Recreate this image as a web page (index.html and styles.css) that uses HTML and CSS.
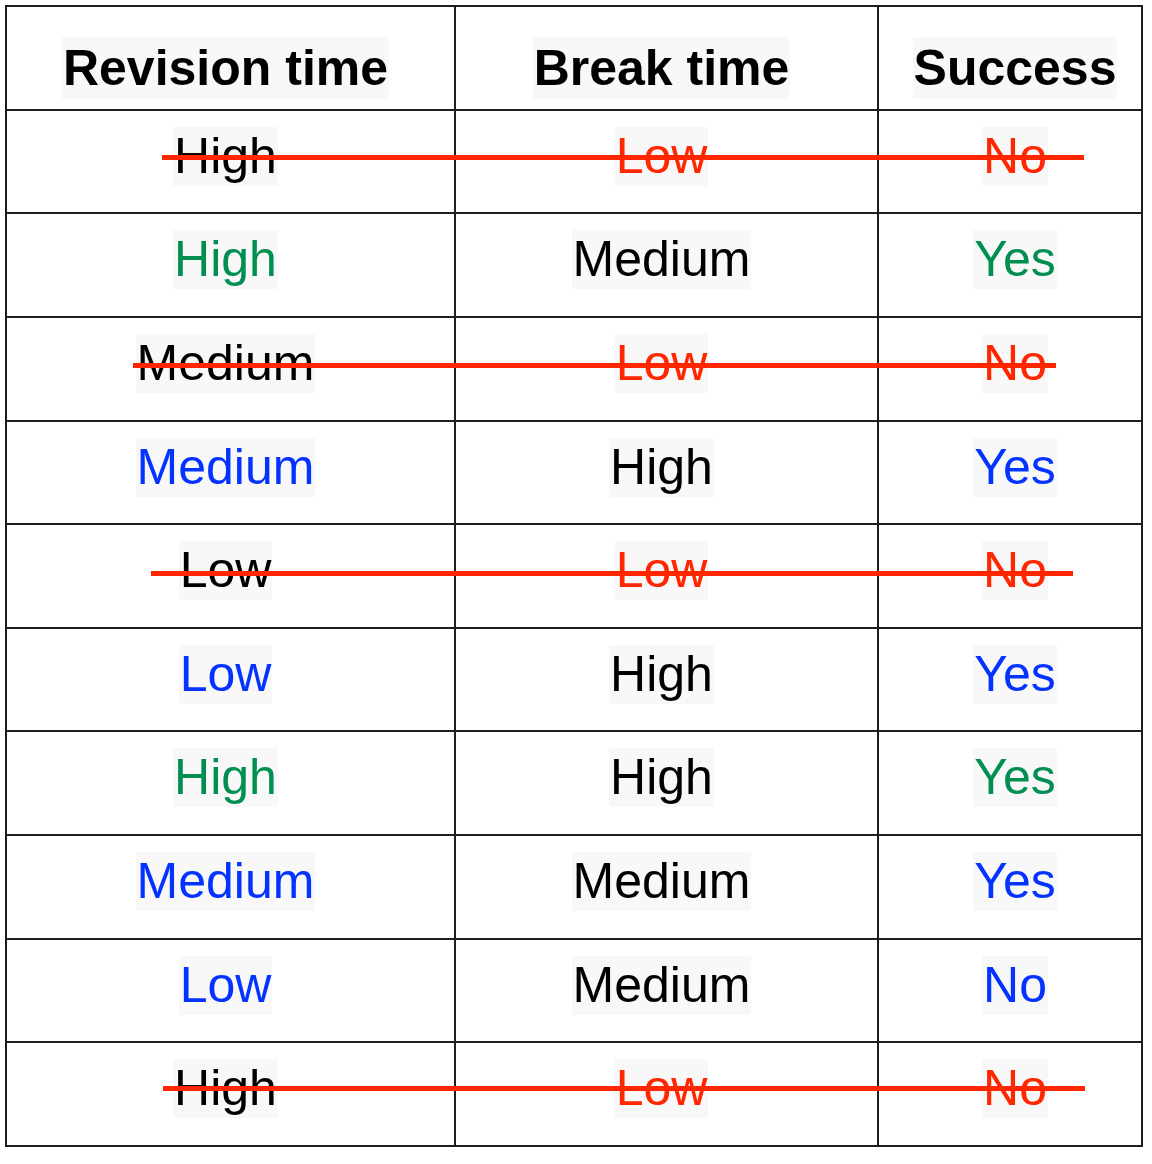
FILE: index.html
```html
<!DOCTYPE html>
<html lang="en">
<head>
<meta charset="utf-8">
<title>Revision and break time</title>
<link rel="stylesheet" href="styles.css">
</head>
<body>
<div class="wrap">
  <table class="grid">
    <colgroup>
      <col class="c1"><col class="c2"><col class="c3">
    </colgroup>
    <thead>
      <tr>
        <th class="k1"><span class="hl">Revision time</span></th>
        <th class="k2"><span class="hl">Break time</span></th>
        <th class="k3"><span class="hl">Success</span></th>
      </tr>
    </thead>
    <tbody>
      <tr>
        <td class="k1"><span class="hl">High</span></td>
        <td class="k2"><span class="hl red">Low</span></td>
        <td class="k3"><span class="hl red">No</span></td>
      </tr>
      <tr>
        <td class="k1"><span class="hl green">High</span></td>
        <td class="k2"><span class="hl">Medium</span></td>
        <td class="k3"><span class="hl green">Yes</span></td>
      </tr>
      <tr>
        <td class="k1"><span class="hl">Medium</span></td>
        <td class="k2"><span class="hl red">Low</span></td>
        <td class="k3"><span class="hl red">No</span></td>
      </tr>
      <tr>
        <td class="k1"><span class="hl blue">Medium</span></td>
        <td class="k2"><span class="hl">High</span></td>
        <td class="k3"><span class="hl blue">Yes</span></td>
      </tr>
      <tr>
        <td class="k1"><span class="hl">Low</span></td>
        <td class="k2"><span class="hl red">Low</span></td>
        <td class="k3"><span class="hl red">No</span></td>
      </tr>
      <tr>
        <td class="k1"><span class="hl blue">Low</span></td>
        <td class="k2"><span class="hl">High</span></td>
        <td class="k3"><span class="hl blue">Yes</span></td>
      </tr>
      <tr>
        <td class="k1"><span class="hl green">High</span></td>
        <td class="k2"><span class="hl">High</span></td>
        <td class="k3"><span class="hl green">Yes</span></td>
      </tr>
      <tr>
        <td class="k1"><span class="hl blue">Medium</span></td>
        <td class="k2"><span class="hl">Medium</span></td>
        <td class="k3"><span class="hl blue">Yes</span></td>
      </tr>
      <tr>
        <td class="k1"><span class="hl blue">Low</span></td>
        <td class="k2"><span class="hl">Medium</span></td>
        <td class="k3"><span class="hl blue">No</span></td>
      </tr>
      <tr>
        <td class="k1"><span class="hl">High</span></td>
        <td class="k2"><span class="hl red">Low</span></td>
        <td class="k3"><span class="hl red">No</span></td>
      </tr>
    </tbody>
  </table>
  <div class="strike s1"></div>
  <div class="strike s3"></div>
  <div class="strike s5"></div>
  <div class="strike s10"></div>
</div>
</body>
</html>
```

FILE: styles.css
```css
html, body {
  margin: 0;
  padding: 0;
  background: #ffffff;
}

body {
  font-family: "Liberation Sans", Arial, Helvetica, sans-serif;
  color: #000000;
}

.wrap {
  position: relative;
  padding: 5px 0 0 5px;
  width: 1140px;
}

.grid {
  border-collapse: collapse;
  table-layout: fixed;
  width: 1136px;
}

.c1 { width: 449px; }
.c2 { width: 423px; }
.c3 { width: 264px; }

.grid th,
.grid td {
  border: 2px solid #1e1e1e;
  text-align: center;
  vertical-align: top;
  padding: 16px 0 0 0;
  height: 103.64px;
  box-sizing: border-box;
  font-size: 50px;
  font-weight: normal;
}

.grid th {
  font-weight: bold;
  padding-top: 30px;
}

.k1 { padding-right: 10px !important; }
.k2 { padding-right: 10px !important; }
.k3 { padding-left: 10px !important; }

.hl {
  display: inline-block;
  line-height: 59px;
  padding: 0 1px;
  background: #f8f8f8;
  white-space: nowrap;
}

.grid th .hl {
  line-height: 62px;
}

.red { color: #ff2600; }
.green { color: #008f51; }
.blue { color: #0433ff; }

.strike {
  position: absolute;
  height: 5px;
  background: #ff2600;
  width: 922px;
}

.s1 { left: 162px; top: 155px; }
.s3 { left: 133px; top: 363px; width: 923px; }
.s5 { left: 151px; top: 571px; }
.s10 { left: 163px; top: 1086px; }
```
